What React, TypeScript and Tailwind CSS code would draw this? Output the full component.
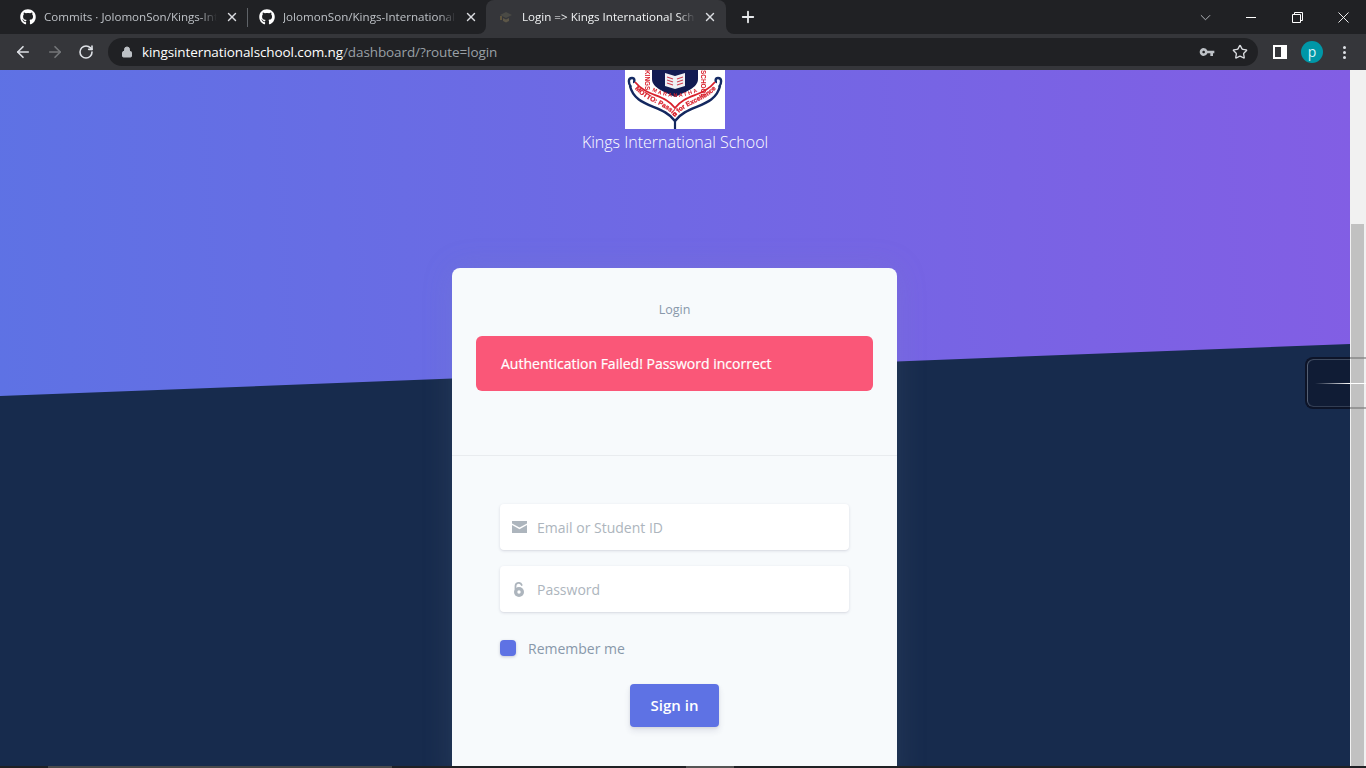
import { ArrowLeft, ArrowRight, RotateCw, Lock, Star, Plus, X } from "lucide-react";
import { FaGithub } from "react-icons/fa";
import { MdVpnKey } from "react-icons/md";

const font = { fontFamily: '"Open Sans", sans-serif' };

function Tab({ title, active, width }: { title: string; active?: boolean; width: string }) {
  return (
    <div
      className={`relative flex h-[34px] items-center pl-[12px] ${width} ${
        active ? "rounded-t-lg bg-[#35363a] pr-[9px] text-[#f1f3f4]" : "pr-[8px] text-[#bdc1c6]"
      }`}
    >
      {active && (
        <>
          <div className="absolute -left-2 bottom-0 h-2 w-2 bg-[#35363a]">
            <div className="h-full w-full rounded-br-lg bg-[#202124]" />
          </div>
          <div className="absolute -right-2 bottom-0 h-2 w-2 bg-[#35363a]">
            <div className="h-full w-full rounded-bl-lg bg-[#202124]" />
          </div>
        </>
      )}
      {active ? (
        <svg viewBox="0 0 16 16" className="mr-2 h-4 w-4 shrink-0">
          <path d="M2 6l6-3 6 3-6 3z" fill="#4a4a45" />
          <path d="M5 9v3l3 1.5 3-1.5V9l-3 1.5z" fill="#5c5647" />
          <path d="M3 7v4" stroke="#8a7440" strokeWidth="1" />
        </svg>
      ) : (
        <FaGithub className="mr-2 h-4 w-4 shrink-0 text-white" />
      )}
      <span className="flex-1 overflow-hidden whitespace-nowrap text-[11.6px] leading-4 [mask-image:linear-gradient(to_right,black_90%,transparent)]">
        {title}
      </span>
      <X className="ml-2 h-3.5 w-3.5 shrink-0 text-[#dadce0]" strokeWidth={2.4} />
    </div>
  );
}

// school crest, only its lower part is in view because the page is scrolled
function Crest() {
  const sans = "Liberation Sans, sans-serif";
  return (
    <svg viewBox="0 0 100 59" className="block h-[59px] w-[100px] bg-white">
      <defs>
        <path id="ribbon" d="M7 15C18 32 38 32 50 47 62 32 82 32 94 15" />
        <path id="arc" d="M27 21Q50 33 74 21" />
      </defs>
      <g className="blur-[0.4px]">
        <path d="M6 17C3 13 3 8 7 8c3 0 3 4 1 4" fill="none" stroke="#142a63" strokeWidth="2.4" />
        <path d="M94 17c3-4 3-9-1-9-3 0-3 4-1 4" fill="none" stroke="#142a63" strokeWidth="2.4" />
        <path d="M5 16C10 38 38 34 50 51 62 34 90 38 95 16" fill="none" stroke="#14285f" strokeWidth="2.4" />
        <path d="M50 51v8" stroke="#14285f" strokeWidth="2.2" />
        <path d="M10 12C22 27 40 24 50 38 60 24 78 27 90 12" fill="none" stroke="#d8202c" strokeWidth="1.8" />
        <text fontSize="6.6" fontWeight="700" fill="#d8202c" stroke="#d8202c" strokeWidth="0.25" fontFamily={sans}>
          <textPath href="#ribbon" startOffset="50%" textAnchor="middle">
            MOTTO: Passion for Excellence
          </textPath>
        </text>
        <path d="M27 0h46v9C73 18 60 22 50 27 40 22 27 18 27 9z" fill="#111b52" />
        <path d="M40 3 50 6l10-3v13l-10 3-10-3z" fill="#eef0f5" />
        <path d="M42 7l6 2M42 10l6 2M42 13l6 2M58 7l-6 2M58 10l-6 2M58 13l-6 2" stroke="#d04050" strokeWidth="1.2" />
        <text fontSize="5.4" fontWeight="700" fill="#d8202c" fontFamily={sans} letterSpacing="1.6">
          <textPath href="#arc" startOffset="50%" textAnchor="middle">
            MARANATHA
          </textPath>
        </text>
        <text transform="translate(20 0) rotate(90)" fontSize="6.4" fontWeight="700" fill="#d8202c" fontFamily={sans}>
          KINGS
        </text>
        <text transform="translate(76 0) rotate(90)" fontSize="6.4" fontWeight="700" fill="#d8202c" fontFamily={sans}>
          SCHOOL
        </text>
      </g>
    </svg>
  );
}

function Field({ placeholder, icon }: { placeholder: string; icon: React.ReactNode }) {
  return (
    <div className="flex h-[46px] items-center rounded bg-white pl-3 shadow-[0_1px_3px_rgba(50,50,93,0.15),0_1px_0_rgba(0,0,0,0.02)]">
      <span className="flex w-[25px] shrink-0 justify-start">{icon}</span>
      <span className="pt-[2px] text-sm text-[#adb5bd]">{placeholder}</span>
    </div>
  );
}

export default function App() {
  return (
    <div className="flex h-screen flex-col overflow-hidden bg-[#202124]" style={font}>
      {/* browser tabs */}
      <div className="flex h-[34px] shrink-0 items-center bg-[#202124]">
        <div className="flex items-center pl-2">
          <Tab title="Commits · JolomonSon/Kings-Int" width="w-[239px]" />
          <div className="-mr-px h-[19px] w-px bg-[#5f6368]" />
          <Tab title="JolomonSon/Kings-International-" width="w-[239px]" />
          <Tab title="Login => Kings International Sch" active width="w-[240px]" />
        </div>
        <Plus className="ml-[13px] h-[18px] w-[18px] text-[#e8eaed]" strokeWidth={2.4} />
        <div className="flex-1" />
        <svg viewBox="0 0 12 7" className="mr-[35px] h-[7px] w-[11px]" fill="none" stroke="#bdc1c6" strokeWidth="1">
          <path d="M1 1l5 5 5-5" />
        </svg>
        <div className="mr-[36px] h-px w-[10px] bg-white" />
        <svg viewBox="0 0 11 11" className="mr-[35px] h-[11px] w-[11px]" fill="none" stroke="#fff" strokeWidth="1">
          <path d="M.5 2.5h8v8h-8zM2.5 2.5v-2h8v8h-2" />
        </svg>
        <svg viewBox="0 0 12 12" className="mr-[17px] h-[11px] w-[11px]" fill="none" stroke="#fff" strokeWidth="1">
          <path d="M.5.5l11 11M11.5.5l-11 11" />
        </svg>
      </div>

      {/* address bar */}
      <div className="flex h-[36px] shrink-0 items-start bg-[#35363a] pt-[4px]">
        <ArrowLeft className="ml-[14px] mt-[5px] h-[18px] w-[18px] text-[#dee1e6]" strokeWidth={2.2} />
        <ArrowRight className="ml-[14px] mt-[5px] h-[18px] w-[18px] text-[#75777a]" strokeWidth={2.2} />
        <RotateCw className="ml-[14px] mt-[6px] h-4 w-4 text-[#dee1e6]" strokeWidth={2.4} />
        <div className="ml-[14px] flex h-7 w-[1150px] items-center rounded-full bg-[#202124]">
          <Lock className="ml-[13px] h-3 w-3 text-[#bdc1c6]" fill="#bdc1c6" strokeWidth={2} />
          <span className="ml-[9px] text-[13.5px] leading-5 tracking-[-0.1px] text-white">
            kingsinternationalschool.com.ng<span className="text-[#9aa0a6]">/dashboard/?route=login</span>
          </span>
          <div className="flex-1" />
          <MdVpnKey className="mr-[17px] h-4 w-4 text-[#bdc1c6]" />
          <Star className="mr-[10px] h-4 w-4 text-[#dadce0]" strokeWidth={2} />
        </div>
        <div className="ml-[15px] mt-[7px] flex h-[14px] w-[14px] border-2 border-white bg-white">
          <div className="h-full w-[6px] bg-[#35363a]" />
        </div>
        <div className="ml-[14px] mt-[3px] flex h-[22px] w-[22px] items-center justify-center rounded-full bg-[#0097a7] text-[14px] leading-none text-[#d9f4f7]">
          p
        </div>
        <div className="ml-[20px] mt-[8px] flex flex-col gap-[2px]">
          <div className="h-[3px] w-[3px] rounded-full bg-[#dee1e6]" />
          <div className="h-[3px] w-[3px] rounded-full bg-[#dee1e6]" />
          <div className="h-[3px] w-[3px] rounded-full bg-[#dee1e6]" />
        </div>
      </div>

      <div className="relative flex min-h-0 flex-1">
        {/* page */}
        <div className="relative flex-1 overflow-hidden bg-[#172b4d]">
          <div className="absolute inset-x-0 top-0 h-[326px] bg-[linear-gradient(87deg,#5e72e4_0,#825ee4_100%)] [clip-path:polygon(0_0,100%_0,100%_274px,0_326px)]" />
          <div className="relative flex flex-col items-center">
            <Crest />
            <h1 className="mt-px text-[16px] font-light leading-6 text-white">Kings International School</h1>

            <div className="mr-px mt-[114px] h-[520px] w-[445px] rounded-t-lg bg-[#f7fafc] shadow-[0_0_2rem_0_rgba(136,152,170,0.15)]">
              <div className="h-[188px] border-b border-[#e9ecef] px-6 pt-[32px]">
                <div className="text-center text-[12.5px] leading-[19px] text-[#8898aa]">Login</div>
                <div className="mt-[17px] flex h-[55px] items-center rounded-md bg-[#fa5778] px-[25px] text-sm font-medium text-white [-webkit-text-stroke:0.2px_white]">
                  Authentication Failed! Password incorrect
                </div>
              </div>

              <div className="px-12 pt-12">
                <Field
                  placeholder="Email or Student ID"
                  icon={
                    <svg viewBox="0 0 15 12" className="h-3 w-[15px]">
                      <path d="M0 0h15v2.4L7.5 6.6 0 2.4z M0 4l7.5 4.2L15 4v8H0z" fill="#adb5bd" />
                    </svg>
                  }
                />
                <div className="mt-4">
                  <Field
                    placeholder="Password"
                    icon={
                      <svg viewBox="0 0 12 15" className="ml-px h-[15px] w-3">
                        <path d="M2.5 7V4a3.2 3.2 0 0 1 6.2-1" fill="none" stroke="#adb5bd" strokeWidth="1.8" strokeLinecap="round" />
                        <circle cx="6" cy="10" r="5" fill="#adb5bd" />
                        <circle cx="6" cy="10" r="1.7" fill="#fff" />
                      </svg>
                    }
                  />
                </div>
                <div className="mt-7 flex h-4 items-center">
                  <div className="h-4 w-4 rounded bg-[#5e72e4] shadow-[0_1px_3px_rgba(50,50,93,0.25)]" />
                  <span className="ml-3 pt-px text-sm text-[#8898aa]">Remember me</span>
                </div>
                <div className="mt-7 flex justify-center">
                  <button className="h-[43px] w-[89px] rounded bg-[#5e72e4] text-[15px] font-semibold text-white shadow-[0_4px_6px_rgba(50,50,93,0.11),0_1px_3px_rgba(0,0,0,0.08)]">
                    Sign in
                  </button>
                </div>
              </div>
            </div>
          </div>
        </div>

        {/* page scrollbar */}
        <div className="flex w-4 shrink-0 flex-col bg-[#f1f1f1] pl-px pr-[2px]">
          <div className="h-[154px]" />
          <div className="flex-1 bg-[#c1c1c1]" />
        </div>

        {/* floating widget at the edge: dark over the page, see-through over the scrollbar */}
        <div className="absolute left-[1305px] top-[287px] flex h-[52px] w-[45px] items-center rounded-l-lg border-2 border-r-0 border-[#0d1428] bg-[#101c35] shadow-[inset_1px_1px_0_rgba(150,160,175,0.35),inset_1px_-1px_0_rgba(150,160,175,0.25)]">
          <div className="ml-[8px] h-px flex-1 bg-gradient-to-r from-transparent to-white" />
        </div>
        <div className="absolute left-[1350px] top-[287px] flex h-[52px] w-4 items-center border-y-2 border-[#7a7a7a]/60">
          <div className="h-px flex-1 bg-white" />
        </div>
      </div>

      {/* bottom edge */}
      <div className="flex h-[2px] shrink-0 bg-[#202124]">
        <div className="ml-[48px] h-full w-[344px] bg-[#4a4a4a]" />
        <div className="ml-[294px] h-full w-[48px] bg-[#555555]" />
      </div>
    </div>
  );
}
